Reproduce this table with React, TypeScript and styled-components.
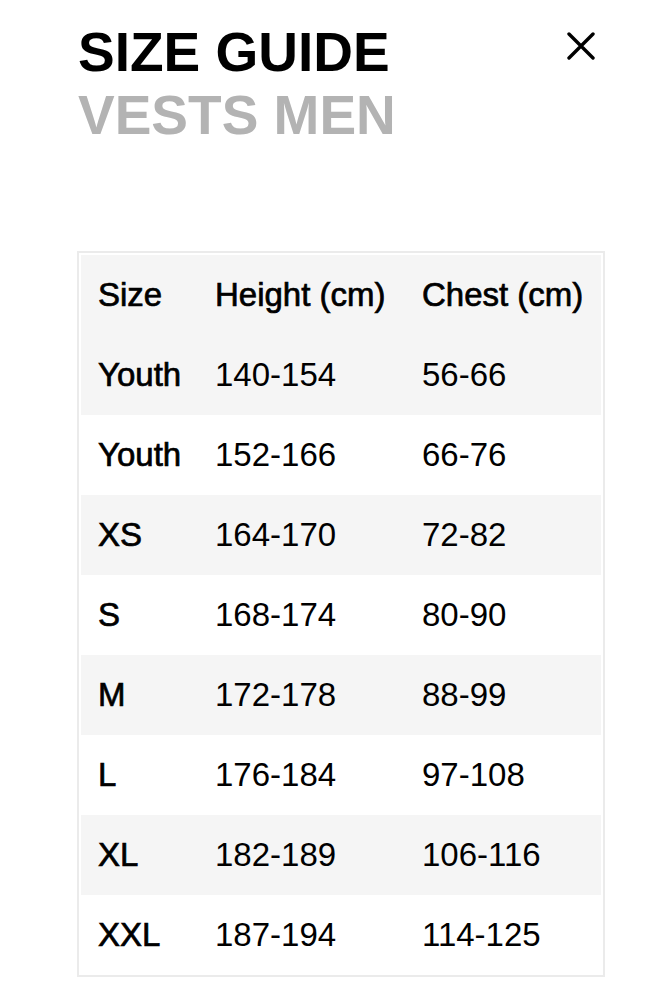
import React from "react";
import styled, { createGlobalStyle } from "styled-components";

const GlobalStyle = createGlobalStyle`
  body {
    margin: 0;
    background: #ffffff;
    font-family: "Liberation Sans", Arial, sans-serif;
    color: #000000;
  }
`;

const Page = styled.div`
  box-sizing: border-box;
  padding: 21px 77px 0 77px;
  width: 672px;
`;

const Header = styled.div`
  display: flex;
  justify-content: space-between;
  align-items: flex-start;
`;

const Titles = styled.div`
  display: flex;
  flex-direction: column;
`;

const Title = styled.h1<{ $muted?: boolean }>`
  margin: 0 0 0 1px;
  font-size: 55px;
  line-height: 63px;
  font-weight: 700;
  color: ${(p) => (p.$muted ? "#b3b3b3" : "#000000")};
`;

const CloseButton = styled.button`
  background: none;
  border: none;
  padding: 0;
  margin-top: 11px;
  width: 28px;
  height: 28px;
  cursor: pointer;
  display: flex;
`;

const TableFrame = styled.div`
  margin-top: 104px;
  border: 2px solid #ebebeb;
  padding: 2px 2px 0 2px;
  width: 528px;
  box-sizing: border-box;
`;

const Table = styled.table`
  width: 520px;
  border-collapse: collapse;
  table-layout: fixed;
`;

const Row = styled.tr<{ $shaded?: boolean }>`
  height: 80px;
  background: ${(p) => (p.$shaded ? "#f5f5f5" : "#ffffff")};
`;

const Cell = styled.td<{ $strong?: boolean }>`
  padding: 0 0 0 17px;
  font-size: 33px;
  font-weight: 400;
  -webkit-text-stroke: ${(p) => (p.$strong ? "0.7px #000" : "0")};
  text-align: left;
  vertical-align: middle;
  white-space: nowrap;
`;

const HeadCell = styled(Cell).attrs({ as: "th" })``;

const columns = ["117px", "207px", "196px"];

const rows = [
  ["Youth", "140-154", "56-66"],
  ["Youth", "152-166", "66-76"],
  ["XS", "164-170", "72-82"],
  ["S", "168-174", "80-90"],
  ["M", "172-178", "88-99"],
  ["L", "176-184", "97-108"],
  ["XL", "182-189", "106-116"],
  ["XXL", "187-194", "114-125"],
];

const CloseIcon = () => (
  <svg width="28" height="28" viewBox="0 0 28 28">
    <path
      d="M2 2 L26 26 M26 2 L2 26"
      stroke="#000"
      strokeWidth="3.4"
      strokeLinecap="round"
    />
  </svg>
);

const App: React.FC = () => {
  return (
    <>
      <GlobalStyle />
      <Page>
        <Header>
          <Titles>
            <Title>SIZE GUIDE</Title>
            <Title $muted>VESTS MEN</Title>
          </Titles>
          <CloseButton aria-label="Close">
            <CloseIcon />
          </CloseButton>
        </Header>
        <TableFrame>
          <Table>
            <colgroup>
              {columns.map((w, i) => (
                <col key={i} style={{ width: w }} />
              ))}
            </colgroup>
            <thead>
              <Row $shaded>
                <HeadCell $strong>Size</HeadCell>
                <HeadCell $strong>Height (cm)</HeadCell>
                <HeadCell $strong>Chest (cm)</HeadCell>
              </Row>
            </thead>
            <tbody>
              {rows.map((r, i) => (
                <Row key={i} $shaded={i % 2 === 0}>
                  <Cell $strong>{r[0]}</Cell>
                  <Cell>{r[1]}</Cell>
                  <Cell>{r[2]}</Cell>
                </Row>
              ))}
            </tbody>
          </Table>
        </TableFrame>
      </Page>
    </>
  );
};

export default App;
